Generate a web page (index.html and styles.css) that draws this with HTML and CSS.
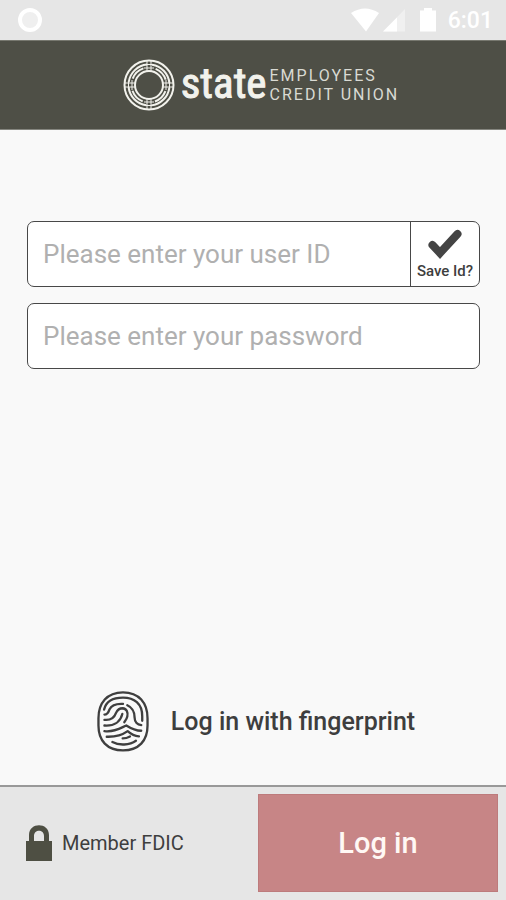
FILE: index.html
```html
<!DOCTYPE html>
<html lang="en">
<head>
<meta charset="utf-8">
<meta name="viewport" content="width=device-width, initial-scale=1">
<title>State Employees Credit Union</title>
<link rel="stylesheet" href="styles.css">
</head>
<body>
<div class="status">
  <svg class="ring" viewBox="0 0 24 24" aria-hidden="true"><circle cx="12" cy="12" r="10"/></svg>
  <div class="indicators">
    <svg class="signals" viewBox="0 0 86 24" aria-hidden="true">
      <path d="M0 5Q14-4 28 5L15 23.500Z"/>
      <path class="faint" d="M32 23.500L54 1V23.500Z"/>
      <path d="M32 23.500L46 9.500V23.500Z"/>
      <path d="M69 2.500H73V0H81V2.500H85V23.500H69Z"/>
    </svg>
    <span class="time">6:01</span>
  </div>
</div>
<header class="brand">
  <svg class="emblem" viewBox="0 0 52 52" aria-hidden="true">
    <circle cx="26" cy="26" r="24.500"/>
    <circle cx="26" cy="26" r="20.500" stroke-dasharray="27 5.200" stroke-dashoffset="-2.600"/>
    <circle cx="26" cy="26" r="17.500" stroke-dasharray="15 12.490" stroke-dashoffset="-6.240"/>
    <circle cx="26" cy="26" r="14"/>
    <path class="thin" d="M24 1V12M28 1V12M24 40V51M28 40V51M1 24H12M1 28H12M40 24H51M40 28H51M22 5.500H30M22 46.500H30M5.500 22V30M46.500 22V30M21 9H31M21 43H31M9 21V31M43 21V31"/>
  </svg>
  <span class="name">state</span>
  <span class="tagline">EMPLOYEES<br>CREDIT UNION</span>
</header>
<form class="login">
  <main class="fields">
    <div class="field">
      <input class="entry" type="text" placeholder="Please enter your user ID" aria-label="User ID">
      <label class="save">
        <input class="save-box" type="checkbox" checked>
        <svg class="tick" viewBox="0 0 34 30" aria-hidden="true"><path d="M4.500 16L12 24L29.500 5"/></svg>
        <span>Save Id?</span>
      </label>
    </div>
    <div class="field">
      <input class="entry" type="password" placeholder="Please enter your password" aria-label="Password">
    </div>
    <button class="fingerprint" type="button">
      <svg class="print" viewBox="36 32 156 184" aria-hidden="true">
        <path d="M114 36C66 36 40 68 40 114V136C40 182 66 211 114 211S188 182 188 136V114C188 68 162 36 114 36Z"/>
        <path d="M57 88C63 62 86 52 114 52C148 52 172 70 172 108V122"/>
        <path d="M58 103C67 103 70 97 73 88C80 74 98 70 114 71"/>
        <path d="M127 75C142 82 149 94 149 112C149 126 158 134 169 135"/>
        <path d="M58 119C78 121 88 112 93 98C98 87 105 84 113 84C125 85 130 97 127 109C125 117 121 121 118 126"/>
        <path d="M112 101C107 124 88 138 58 136"/>
        <path d="M58 153C85 157 104 145 124 136C138 145 149 152 169 152"/>
        <path d="M65 170C92 171 110 166 128 153C138 162 148 168 162 169"/>
        <path d="M82 186C102 197 134 196 153 182M113 175C121 175 128 173 135 169"/>
      </svg>
      <span>Log in with fingerprint</span>
    </button>
  </main>
  <footer class="bottom">
    <div class="member">
      <svg class="lock" viewBox="0 0 26 36" aria-hidden="true"><path d="M0 16H3V10C3-3 23-3 23 10V16H26V36H0ZM8 16H18V11C18 4 8 4 8 11Z"/></svg>
      <span>Member FDIC</span>
    </div>
    <button class="submit" type="submit">Log in</button>
  </footer>
</form>
</body>
</html>
```
FILE: styles.css
```css
* { box-sizing: border-box; }
body {
  margin: 0;
  min-height: 100vh;
  display: flex;
  flex-direction: column;
  background: #f9f9f9;
  color: #3e3e3e;
  font-family: Roboto, "Liberation Sans", sans-serif;
}
svg { display: block; flex: none; }
button, input { font: inherit; color: inherit; }

.status {
  height: 40px;
  padding: 0 13px 0 18px;
  display: flex;
  align-items: center;
  justify-content: space-between;
  background: #e6e6e6;
  color: #fff;
}
.ring { width: 24px; height: 24px; fill: #efefef; stroke: #fff; stroke-width: 4; }
.indicators { display: flex; align-items: center; gap: 11px; }
.signals { width: 86px; height: 24px; fill: #fff; }
.faint { fill: #f0f0f0; }
.time { font-size: 23px; font-weight: 500; line-height: 28px; padding-top: 2px; }

.brand {
  height: 90px;
  padding-left: 16px;
  display: flex;
  align-items: center;
  justify-content: center;
  background: #4e4f46;
  border-top: 1px solid #77786f;
  border-bottom: 1px solid #85867f;
  color: #f2f2ec;
}
.emblem { width: 52px; height: 52px; fill: none; stroke: #f2f2ec; stroke-width: 2; }
.thin { stroke-width: 1; }
.name {
  margin: 0 3px 4px 6px;
  font-family: "Roboto Condensed", "Liberation Sans Narrow", "Liberation Sans", sans-serif;
  font-size: 43px;
  line-height: 54px;
  -webkit-text-stroke: 1px currentColor;
}
.tagline { font-size: 16px; line-height: 19px; letter-spacing: 2px; color: #d9dad3; }

.login { flex: 1; display: flex; flex-direction: column; }
.fields {
  flex: 1;
  display: flex;
  flex-direction: column;
  gap: 16px;
  padding: 91px 26px 33px 27px;
}
.field {
  display: flex;
  height: 66px;
  background: #fff;
  border: 1px solid #484848;
  border-radius: 7px;
  overflow: hidden;
}
.entry {
  flex: 1;
  min-width: 0;
  padding: 0 15px;
  border: 0;
  background: transparent;
  font-size: 26px;
}
.entry::placeholder { color: #b0b0b0; opacity: 1; }
.save {
  position: relative;
  width: 69px;
  display: flex;
  flex-direction: column;
  align-items: center;
  justify-content: center;
  gap: 3px;
  border-left: 1px solid #484848;
  font-size: 15px;
  font-weight: 500;
  line-height: 18px;
}
.save-box { position: absolute; inset: 0; width: 100%; height: 100%; margin: 0; opacity: 0; }
.tick {
  width: 34px;
  height: 30px;
  fill: none;
  stroke: #444;
  stroke-width: 8;
  stroke-linecap: round;
}
.save-box:not(:checked) + .tick { opacity: 0.3; }
.fingerprint {
  margin: auto auto 0;
  padding: 0 0 0 5px;
  display: flex;
  align-items: center;
  gap: 22px;
  border: 0;
  background: none;
  font-size: 25px;
  font-weight: 500;
}
.print { width: 52px; height: 61px; fill: none; stroke: #3f3f3f; stroke-width: 7; stroke-linecap: round; stroke-linejoin: round; }

.bottom {
  display: grid;
  grid-template-columns: 258px 1fr;
  padding: 7px 8px 8px 0;
  height: 115px;
  background: #e6e6e6;
  border-top: 2px solid #999;
}
.member {
  display: flex;
  align-items: center;
  gap: 10px;
  padding-left: 26px;
  font-size: 20px;
}
.lock { width: 26px; height: 36px; fill: #4e4f43; fill-rule: evenodd; }
.submit {
  border: 1px solid #bd7b7c;
  background: #c78586;
  color: #fff8f4;
  font-size: 29px;
  font-weight: 500;
}
```
